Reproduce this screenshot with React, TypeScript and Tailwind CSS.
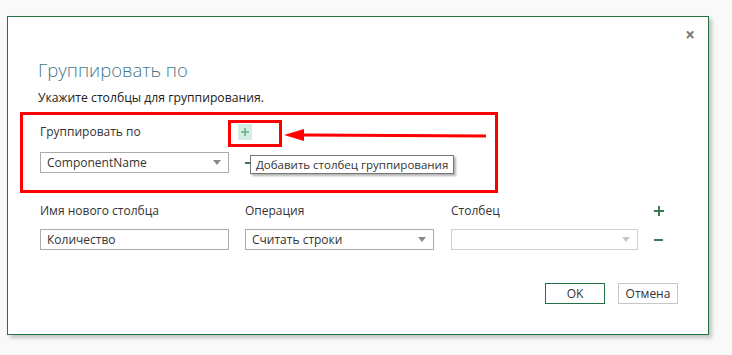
import React from 'react';

const font = { fontFamily: '"Open Sans", "Noto Sans", sans-serif' };

function Caret({ light }: { light?: boolean }) {
  return (
    <svg width="8" height="5" viewBox="0 0 8 5" className="shrink-0">
      <path d="M0 0h8L4 5z" fill={light ? '#c8c8c8' : '#8a8a8a'} />
    </svg>
  );
}

function Select({ value, light }: { value?: string; light?: boolean }) {
  return (
    <div className="w-[189px] h-[21px] border border-[#ababab] bg-white flex items-center justify-between pl-[6px] pr-[7px] text-[12px] text-[#333]">
      <span className="leading-none">{value}</span>
      <Caret light={light} />
    </div>
  );
}

function Plus({ color = '#3d7b4f', size = 10 }: { color?: string; size?: number }) {
  return (
    <svg width={size} height={size} viewBox="0 0 10 10">
      <path d="M4 0h2v4h4v2H6v4H4V6H0V4h4z" fill={color} />
    </svg>
  );
}

function Minus() {
  return (
    <svg width="9" height="2" viewBox="0 0 9 2">
      <rect width="9" height="2" fill="#3d7b4f" />
    </svg>
  );
}

export default function App() {
  return (
    <div className="w-[732px] h-[355px] bg-[#f9f9f9] pt-[16px] pl-[7px] overflow-hidden" style={font}>
      <div className="relative w-[702px] h-[319px] bg-white border border-[#217346] shadow-[3px_3px_4px_rgba(0,0,0,0.22)]">
        {/* close */}
        <div className="h-[26px] flex justify-end items-end pr-[13px]">
          <span className="text-[17px] leading-none font-bold text-[#777]">×</span>
        </div>

        <div className="pl-[32px]">
          <div className="-ml-[2px] mt-[13px] h-[28px] flex items-center text-[18.5px] font-light text-[#44788a]">
            Группировать по
          </div>
          <div className="-ml-[2px] mt-[5px] h-[18px] flex items-center text-[12.2px] text-[#222]">
            Укажите столбцы для группирования.
          </div>

          {/* group by section (annotated) */}
          <div className="-ml-[20px] mt-[5px] w-[478px] h-[81px] border-[3px] border-[#ff0000] pl-[17px] pt-[8px]">
            <div className="h-[18px] flex items-center">
              <span className="w-[198px] text-[12px] text-[#333]">Группировать по</span>
              <div className="w-[14px] h-[16px] bg-[#d3eee0] flex items-center justify-center">
                <Plus color="#6cae88" size={8} />
              </div>
            </div>
            <div className="mt-[11px] flex items-center gap-[16px]">
              <Select value="ComponentName" />
              <Minus />
            </div>
          </div>

          {/* aggregation */}
          <div className="mt-[9px] h-[18px] flex items-center text-[12px] text-[#333]">
            <span className="w-[205px]">Имя нового столбца</span>
            <span className="w-[206px]">Операция</span>
            <span className="w-[203px]">Столбец</span>
            <Plus />
          </div>
          <div className="mt-[9px] flex items-center">
            <div className="w-[189px] h-[21px] border border-[#ababab] flex items-center pl-[6px] text-[12px] text-[#333] mr-[16px]">
              Количество
            </div>
            <div className="mr-[17px]">
              <Select value="Считать строки" />
            </div>
            <div className="w-[187px] h-[21px] border border-[#cfcfcf] flex items-center justify-end pr-[7px] mr-[16px]">
              <Caret light />
            </div>
            <Minus />
          </div>

          <div className="mt-[33px] flex justify-end pr-[30px] gap-[13px] text-[12px] text-[#333]">
            <div className="w-[60px] h-[21px] border border-[#217346] flex items-center justify-center">OK</div>
            <div className="w-[60px] h-[21px] border border-[#c6c6c6] flex items-center justify-center">Отмена</div>
          </div>
        </div>

        {/* tooltip */}
        <div className="absolute left-[242px] top-[138px] h-[19px] px-[5px] border border-[#767676] bg-white flex items-center text-[11.5px] text-[#333] shadow-[2px_2px_2px_rgba(0,0,0,0.3)] whitespace-nowrap">
          Добавить столбец группирования
        </div>

        {/* annotation: small box + arrow */}
        <div className="absolute left-[220px] top-[103px] w-[54px] h-[27px] border-[3px] border-[#ff0000]" />
        <svg className="absolute left-[274px] top-[110px]" width="206" height="16" viewBox="0 0 206 16">
          <path d="M204 9L22 8" stroke="#ff0000" strokeWidth="3" />
          <path d="M2 8L22 2L22 14Z" fill="#ff0000" />
        </svg>
      </div>
    </div>
  );
}
